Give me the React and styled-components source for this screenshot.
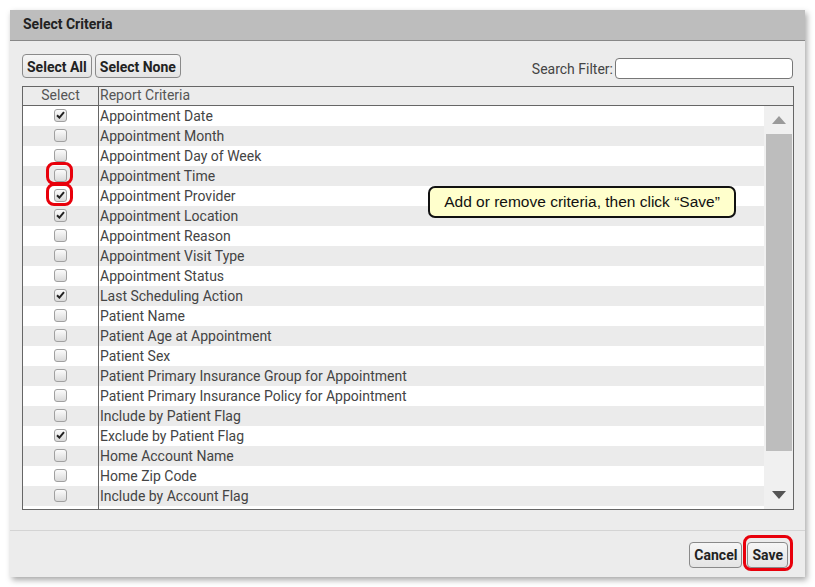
import React from "react";
import styled, { createGlobalStyle } from "styled-components";

const Global = createGlobalStyle`
  html, body { margin: 0; padding: 0; background: #ffffff; }
  body { font-family: Roboto, "Liberation Sans", Arial, sans-serif; }
`;

const Page = styled.div`
  padding: 10px;
  width: 795px;
`;

const Dialog = styled.div`
  position: relative;
  width: 795px;
  height: 567px;
  background: #ececec;
  box-shadow: 2px 3px 6px rgba(0, 0, 0, 0.35);
  display: flex;
  flex-direction: column;
`;

const Header = styled.div`
  height: 31px;
  box-sizing: border-box;
  padding-bottom: 3px;
  background: #bdbdbd;
  border-bottom: 1px solid #888;
  display: flex;
  align-items: center;
  padding-left: 13px;
  font-weight: bold;
  font-size: 14px;
  color: #222;
`;

const Toolbar = styled.div`
  display: flex;
  align-items: flex-end;
  justify-content: space-between;
  padding: 13px 12px 0 12px;
`;

const ButtonGroup = styled.div`
  display: flex;
  gap: 3px;
`;

const Button = styled.button`
  height: 24px;
  padding: 1px 4px 0;
  border: 1px solid #8a8a8a;
  border-radius: 4px;
  background: linear-gradient(#f6f6f6, #e4e4e4);
  font-family: Roboto, "Liberation Sans", Arial, sans-serif;
  font-weight: bold;
  font-size: 14px;
  color: #222;
  cursor: pointer;
`;

const Search = styled.label`
  display: flex;
  align-items: center;
  gap: 2px;
  font-size: 14px;
  color: #444;
  margin-bottom: -1px;
`;

const SearchInput = styled.input`
  width: 172px;
  height: 17px;
  border: 1px solid #777;
  border-radius: 4px;
  background: #fff;
  padding: 1px 2px;
`;

const Table = styled.div`
  margin: 8px 11px 0 12px;
  border: 1px solid #666;
  display: flex;
  flex-direction: column;
  background: #fff;
`;

const HeadRow = styled.div`
  display: grid;
  grid-template-columns: 75px 1fr;
  height: 18px;
  border-bottom: 1px solid #666;
  background: #ececec;
  font-size: 14px;
  color: #555;
  line-height: 17px;
`;

const HeadCell = styled.div`
  text-align: ${(p) => (p.$center ? "center" : "left")};
  padding-left: ${(p) => (p.$center ? "0" : "1px")};
  border-left: ${(p) => (p.$divider ? "1px solid #666" : "none")};
`;

const Body = styled.div`
  height: 403px;
  display: flex;
  overflow: hidden;
`;

const List = styled.div`
  flex: 1;
  display: flex;
  flex-direction: column;
`;

const Row = styled.div`
  display: grid;
  grid-template-columns: 75px 1fr;
  flex: 0 0 20px;
  height: 20px;
  background: ${(p) => (p.$alt ? "#ebebeb" : "#ffffff")};
  font-size: 14px;
  color: #444;
  line-height: 20px;
`;

const CheckCell = styled.div`
  display: flex;
  align-items: center;
  justify-content: center;
`;

const TextCell = styled.div`
  border-left: 1px solid #666;
  padding-left: 1px;
  white-space: nowrap;
`;

const Box = styled.span`
  width: 11px;
  height: 11px;
  border: 1px solid #a0a0a0;
  border-radius: 3px;
  background: linear-gradient(#fbfbfb, #dadada);
  display: flex;
  align-items: center;
  justify-content: center;
  margin-top: -2px;
`;

const Scrollbar = styled.div`
  width: 29px;
  background: #f0f0f0;
  display: flex;
  flex-direction: column;
  align-items: center;
`;

const ArrowBtn = styled.div`
  height: 28px;
  display: flex;
  align-items: center;
  justify-content: center;
`;

const Thumb = styled.div`
  width: 26px;
  flex: 1;
  background: #bdbdbd;
`;

const TrackGap = styled.div`
  flex: 0 0 30px;
`;

const Spacer = styled.div`
  flex: 1;
`;

const Footer = styled.div`
  height: 46px;
  border-top: 1px solid #d4d4d4;
  display: flex;
  align-items: center;
  justify-content: flex-end;
  gap: 5px;
  padding-right: 17px;
`;

const FooterButton = styled(Button)`
  height: 26px;
  margin-top: 1px;
`;

const Tooltip = styled.div`
  position: absolute;
  left: 418px;
  top: 176px;
  width: 304px;
  height: 28px;
  background: #ffffcc;
  border: 2px solid #111;
  border-radius: 7px;
  font-family: "Liberation Sans", Arial, sans-serif;
  font-size: 15.5px;
  color: #111;
  display: flex;
  align-items: center;
  justify-content: center;
`;

const Ring = styled.div`
  position: absolute;
  left: ${(p) => p.$x}px;
  top: ${(p) => p.$y}px;
  width: ${(p) => p.$w}px;
  height: ${(p) => p.$h}px;
  border: 3px solid #e8000b;
  border-radius: 8px;
  box-sizing: border-box;
  pointer-events: none;
`;

const items = [
  ["Appointment Date", true],
  ["Appointment Month", false],
  ["Appointment Day of Week", false],
  ["Appointment Time", false],
  ["Appointment Provider", true],
  ["Appointment Location", true],
  ["Appointment Reason", false],
  ["Appointment Visit Type", false],
  ["Appointment Status", false],
  ["Last Scheduling Action", true],
  ["Patient Name", false],
  ["Patient Age at Appointment", false],
  ["Patient Sex", false],
  ["Patient Primary Insurance Group for Appointment", false],
  ["Patient Primary Insurance Policy for Appointment", false],
  ["Include by Patient Flag", false],
  ["Exclude by Patient Flag", true],
  ["Home Account Name", false],
  ["Home Zip Code", false],
  ["Include by Account Flag", false],
  ["", false],
];

const Check = () => (
  <svg width="9" height="8" viewBox="0 0 9 8">
    <path d="M1 4.2 L3.4 6.6 L8 1.2" fill="none" stroke="#222" strokeWidth="2" />
  </svg>
);

const Up = () => (
  <svg width="14" height="8" viewBox="0 0 14 8">
    <path d="M0 8 L7 0 L14 8 Z" fill="#9a9a9a" />
  </svg>
);

const Down = () => (
  <svg width="14" height="8" viewBox="0 0 14 8">
    <path d="M0 0 L14 0 L7 8 Z" fill="#555" />
  </svg>
);

export default function App() {
  return (
    <Page>
      <Global />
      <Dialog>
        <Header>Select Criteria</Header>
        <Toolbar>
          <ButtonGroup>
            <Button>Select All</Button>
            <Button>Select None</Button>
          </ButtonGroup>
          <Search>
            Search Filter:
            <SearchInput type="text" />
          </Search>
        </Toolbar>
        <Table>
          <HeadRow>
            <HeadCell $center>Select</HeadCell>
            <HeadCell $divider>Report Criteria</HeadCell>
          </HeadRow>
          <Body>
            <List>
              {items.map(([label, checked], i) => (
                <Row key={i} $alt={i % 2 === 1}>
                  <CheckCell>
                    <Box>{checked && <Check />}</Box>
                  </CheckCell>
                  <TextCell>{label}</TextCell>
                </Row>
              ))}
            </List>
            <Scrollbar>
              <ArrowBtn>
                <Up />
              </ArrowBtn>
              <Thumb />
              <TrackGap />
              <ArrowBtn>
                <Down />
              </ArrowBtn>
            </Scrollbar>
          </Body>
        </Table>
        <Spacer />
        <Footer>
          <FooterButton>Cancel</FooterButton>
          <FooterButton>Save</FooterButton>
        </Footer>
        <Tooltip>Add or remove criteria, then click “Save”</Tooltip>
        <Ring $x={36} $y={152} $w={27} $h={23} />
        <Ring $x={36} $y={173} $w={27} $h={23} />
        <Ring $x={733} $y={525} $w={50} $h={36} />
      </Dialog>
    </Page>
  );
}
